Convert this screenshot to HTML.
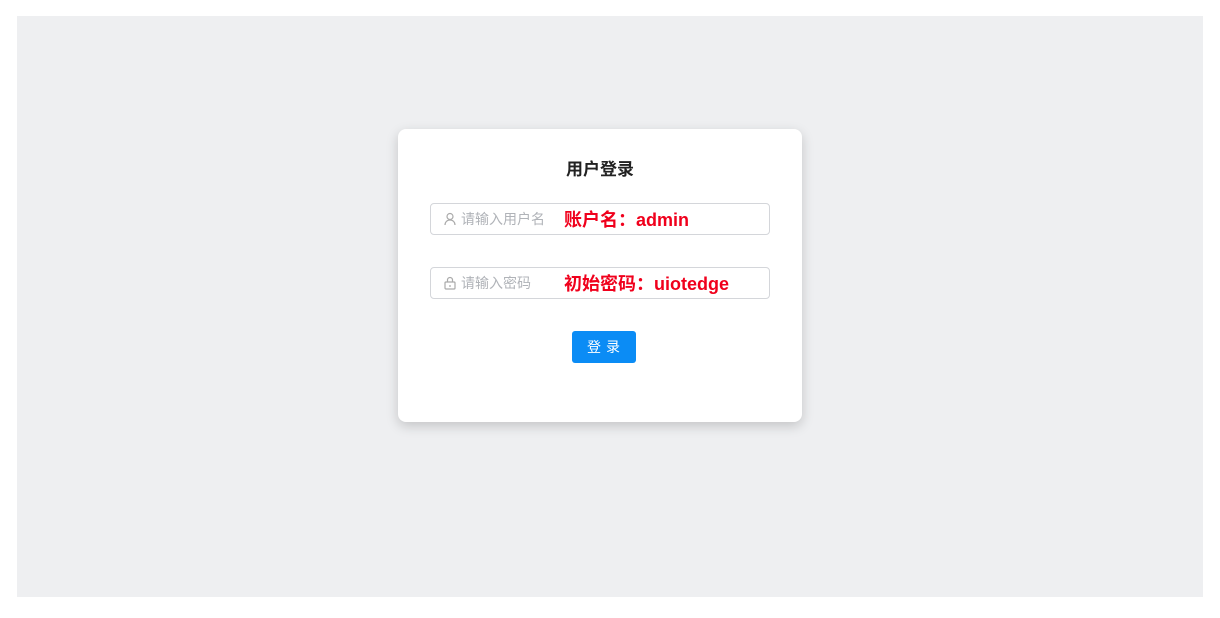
<!DOCTYPE html>
<html><head><meta charset="utf-8"><style>
*{box-sizing:border-box;margin:0;padding:0}
body{width:1220px;height:618px;background:#fff;position:relative;font-family:"Liberation Sans","Noto Sans CJK SC",sans-serif;overflow:hidden}
.bg{position:absolute;left:17px;top:16px;width:1186px;height:581px;background:#eeeff1}
.card{position:absolute;left:398px;top:129px;width:404px;height:293px;background:#fff;border-radius:8px;box-shadow:0 4px 12px rgba(0,0,0,.18)}
.title{position:absolute;left:398px;width:404px;top:158px;text-align:center;font-size:17px;font-weight:bold;color:#222;line-height:24px}
.inp{position:absolute;left:430px;width:340px;height:32px;border:1px solid #d4d6da;border-radius:4px}
.ph{position:absolute;left:30px;top:6px;font-size:14px;color:#b0b3b8;line-height:18px}
.ic{position:absolute;left:12px;top:8px}
.red{position:absolute;left:133px;top:5px;font-size:18px;font-weight:bold;color:#f0001c;line-height:22px}
.btn{position:absolute;left:572px;top:331px;width:64px;height:32px;background:#0b8cf5;border-radius:3px;color:#fff;font-size:14px;text-align:center;line-height:32px;letter-spacing:5px;padding-left:4px}
</style></head><body>
<div class="bg"></div>
<div class="card"></div>
<div class="title">用户登录</div>
<div class="inp" style="top:203px">
<svg class="ic" width="14" height="14" viewBox="0 0 14 14" fill="none" stroke="#aaa" stroke-width="1.2"><circle cx="7" cy="4.5" r="3"/><path d="M2 13c0-3 2.2-5 5-5s5 2 5 5"/></svg>
<span class="ph">请输入用户名</span><span class="red">账户名：admin</span></div>
<div class="inp" style="top:267px">
<svg class="ic" width="14" height="14" viewBox="0 0 14 14" fill="none" stroke="#aaa" stroke-width="1.2"><rect x="2" y="6" width="10" height="7" rx="1"/><path d="M4.5 6V4a2.5 2.5 0 0 1 5 0v2M7 9v2"/></svg>
<span class="ph">请输入密码</span><span class="red">初始密码：uiotedge</span></div>
<div class="btn">登录</div>
</body></html>
